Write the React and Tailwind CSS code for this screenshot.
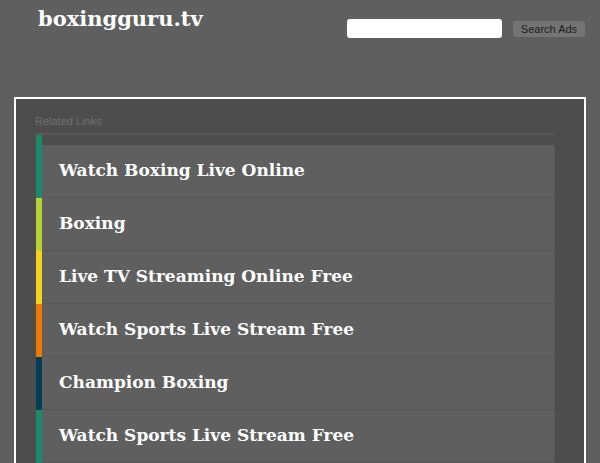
import React from 'react';

const LINKS = [
  { label: 'Watch Boxing Live Online', bar: 'border-[#1b8a68]' },
  { label: 'Boxing', bar: 'border-[#b6d335]' },
  { label: 'Live TV Streaming Online Free', bar: 'border-[#f6d21f]' },
  { label: 'Watch Sports Live Stream Free', bar: 'border-[#f07800]' },
  { label: 'Champion Boxing', bar: 'border-[#013f58]' },
  { label: 'Watch Sports Live Stream Free', bar: 'border-[#1b8a68]' },
];

const App = () => {
  return (
    <div className="h-[463px] w-[600px] overflow-hidden bg-[#5f5f5f]">
      <div className="flex h-[97px] items-start justify-between pl-[38px] pr-[15px]">
        <h1 className="mt-[4px] font-['DejaVu_Serif',serif] text-[21px] font-bold leading-[30px] text-white">
          boxingguru.tv
        </h1>
        <form className="mt-[19px] flex items-center gap-[11px]" onSubmit={(e) => e.preventDefault()}>
          <input type="text" className="h-[19px] w-[155px] rounded-[3px] bg-white outline-none" />
          <button
            type="submit"
            className="h-[16px] w-[72px] rounded-[3px] bg-[#747474] font-['Liberation_Sans',Arial,sans-serif] text-[11px] leading-[16px] text-[#1c1c1c]"
          >
            Search Ads
          </button>
        </form>
      </div>

      <div className="mx-[14px] h-[400px] border-2 border-b-0 border-white bg-[#4d4d4d] pl-[19px] pr-[29px] pt-[16px]">
        <p className="font-['Liberation_Sans',Arial,sans-serif] text-[11px] leading-[13px] text-[#707070]">Related Links</p>
        <div className="mt-[5px] h-[2px] rounded-full bg-[#585858]" />
        <ul className="ml-[1px]">
          {LINKS.map((link, i) => (
            <li key={i} className={`border-l-[6px] ${link.bar} ${i === 0 ? 'pt-[10px]' : ''}`}>
              <a
                href="#"
                className="flex h-[53px] items-center border-b border-r border-[#565656] bg-[#5f5f5f] pl-[17px] font-['DejaVu_Serif',serif] text-[17px] font-bold text-white"
              >
                {link.label}
              </a>
            </li>
          ))}
        </ul>
      </div>
    </div>
  );
};

export default App;
